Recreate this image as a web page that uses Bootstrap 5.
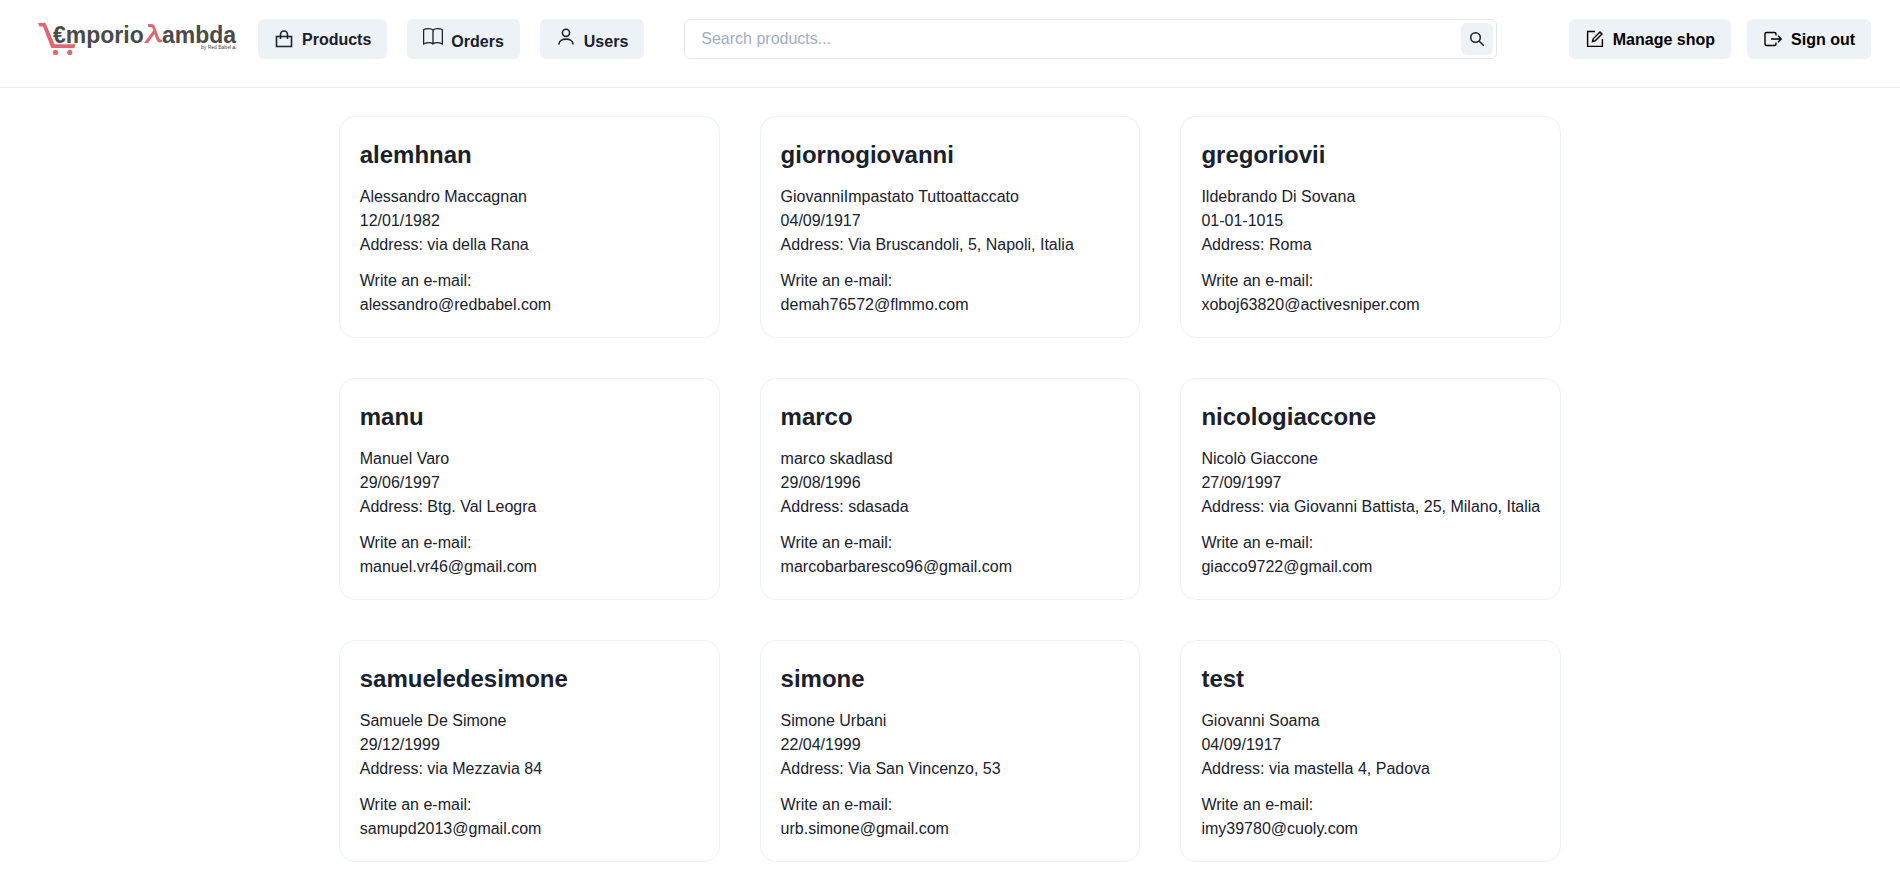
<!DOCTYPE html>
<html lang="en">
<head>
<meta charset="utf-8">
<meta name="viewport" content="width=device-width, initial-scale=1">
<title>Emporio Lambda - Users</title>
<link rel="stylesheet" href="https://cdn.jsdelivr.net/npm/bootstrap@5.3.0/dist/css/bootstrap.min.css">
<style>
  body { font-family: "Liberation Sans", Arial, sans-serif; color: #1a202c; background: #fff; font-size: 16px; line-height: 24px; }
  .site-header { padding: 19px 29px 28px 38px; border-bottom: 1px solid #edf0f3; }
  .main-nav { gap: 20px; margin: 0 40px 0 20px; }
  .shop-btn { --bs-btn-padding-x: 16px; --bs-btn-padding-y: 0px; --bs-btn-border-width: 0px; --bs-btn-border-radius: 6px;
    --bs-btn-bg: #edf2f7; --bs-btn-color: #1a202c; --bs-btn-hover-bg: #e2e8f0; --bs-btn-hover-color: #1a202c; --bs-btn-active-bg: #cbd5e0;
    height: 40px; font-weight: 700; line-height: 19px; white-space: nowrap; display: inline-flex; align-items: center; justify-content: center; }
  .shop-btn svg { width: 20px; height: 20px; margin-right: 8px; flex: none; }
  .shop-btn .inline-icon svg { vertical-align: baseline; }
  .account-btn { --bs-btn-color: #000; --bs-btn-hover-color: #000; }
  .search-form { margin-right: 72px; }
  .search-form .form-control { height: 40px; padding: 0 48px 0 16px; border: 1px solid #e2e8f0; border-radius: 6px; font-size: 16px; line-height: 24px; }
  .search-form .form-control::placeholder { color: #a0aec0; }
  .search-btn { width: 32px; height: 32px; top: 4px; right: 4px; --bs-btn-padding-x: 0px; }
  .search-btn svg { width: 16px; height: 16px; margin: 0; }
  .logo-text { font: 700 23px "Liberation Sans", Arial, sans-serif; fill: #4a4a4a; }
  .logo-by { font: 5px "Liberation Sans", Arial, sans-serif; fill: #4a4a4a; }
  .user-grid { display: grid; grid-template-columns: repeat(3, 1fr); gap: 40px; width: max-content; max-width: 100%; margin: 28px auto; }
  .user-card { --bs-card-border-color: #edf2f7; --bs-card-border-radius: 16px; --bs-card-spacer-x: 20px; --bs-card-spacer-y: 20px; color: inherit; }
  .user-card h2 { font-size: 24px; line-height: 36px; font-weight: 700; margin-bottom: 12px; }
  .user-card p { margin-bottom: 12px; }
  .user-card p:last-child { margin-bottom: 0; }
  .user-card a { color: inherit; text-decoration: none; }
  @media (max-width: 1280px) {
    .site-header { flex-wrap: wrap; row-gap: 16px; }
    .user-grid { grid-template-columns: 1fr; }
  }
</style>
</head>
<body>
<header class="site-header d-flex align-items-center">
  <a href="#" aria-label="Emporio Lambda" class="d-block flex-shrink-0">
    <svg class="d-block" width="200" height="40" viewBox="0 0 200 40">
      <path d="M0 4H7.500L16.500 25.300H37.800L36.300 29H13.300L5 7.400H1.500Z" fill="#e06670"/>
      <circle cx="17.500" cy="33.400" r="2.600" fill="#e06670"/>
      <circle cx="31.800" cy="33.400" r="2.600" fill="#e06670"/>
      <text class="logo-text" x="15" y="24">€mporio</text>
      <path d="M110 5H114Q116 5 117 8L121 19Q122 21.500 124 20.500L124.500 22.500Q120 25 118.300 20.500L116.500 15L110 24H106L115.200 11.500L114.500 9Q114 8 112.500 8H110Z" fill="#e06670"/>
      <text class="logo-text" x="124" y="24">ambda</text>
      <text class="logo-by" x="163" y="30">by Red Babel</text>
      <path d="M194 30L195 28L196 26.500L197 28L198 30Z" fill="#e06670"/>
    </svg>
  </a>
  <nav class="main-nav d-flex flex-shrink-0" aria-label="Main">
    <button type="button" class="btn shop-btn">
      <svg viewBox="0 0 20 20" fill="none" stroke="currentColor" stroke-width="1.600"><path d="M2.500 7.500H17.500V17.500H2.500ZM6.500 10V5.500A3.500 3.500 0 0 1 13.500 5.500V10"/></svg>Products
    </button>
    <button type="button" class="btn shop-btn">
      <span class="inline-icon"><svg viewBox="0 0 20 20" fill="none" stroke="currentColor" stroke-width="1.300"><path d="M10 3C8 1.300 3 1.300 .6 2.800V17C4 15.500 8 15.500 10 17C12 15.500 16 15.500 19.400 17V2.800C17 1.300 12 1.300 10 3ZM10 3V17"/></svg>Orders</span>
    </button>
    <button type="button" class="btn shop-btn">
      <span class="inline-icon"><svg viewBox="0 0 20 20" fill="none" stroke="currentColor" stroke-width="1.600"><circle cx="10" cy="5.800" r="3.600"/><path d="M3 17.500V17C3 10.500 17 10.500 17 17V17.500"/></svg>Users</span>
    </button>
  </nav>
  <form class="search-form position-relative flex-grow-1" role="search" onsubmit="return false">
    <input type="search" class="form-control" placeholder="Search products..." aria-label="Search products">
    <button type="submit" class="btn shop-btn search-btn position-absolute" aria-label="Search">
      <svg viewBox="0 0 16 16" fill="none" stroke="currentColor" stroke-width="1.500"><circle cx="6.500" cy="6.500" r="4.800"/><path d="M10 10L14.800 14.800"/></svg>
    </button>
  </form>
  <div class="d-flex gap-3 flex-shrink-0">
    <button type="button" class="btn shop-btn account-btn">
      <svg viewBox="0 0 20 20" fill="none" stroke="currentColor" stroke-width="1.400"><path d="M10 2.500H2.600V17.400H17.400V10M7.500 12.500L8.200 9.800L15 3L17 5L10.200 11.800Z"/></svg>Manage shop
    </button>
    <button type="button" class="btn shop-btn account-btn">
      <svg viewBox="0 0 20 20" fill="none" stroke="currentColor" stroke-width="1.400"><path d="M13 6.500V5Q13 3.500 11.500 3.500H3.500Q2 3.500 2 5V15Q2 16.500 3.500 16.500H11.500Q13 16.500 13 15V13.500M8 10H18M15 6.800L18.200 10L15 13.200"/></svg>Sign out
    </button>
  </div>
</header>

<main class="user-grid">
  <article class="card user-card"><div class="card-body">
    <h2>alemhnan</h2>
    <p>Alessandro Maccagnan<br>12/01/1982<br>Address: via della Rana</p>
    <p>Write an e-mail:<br><a href="mailto:alessandro@redbabel.com">alessandro@redbabel.com</a></p>
  </div></article>
  <article class="card user-card"><div class="card-body">
    <h2>giornogiovanni</h2>
    <p>GiovanniImpastato Tuttoattaccato<br>04/09/1917<br>Address: Via Bruscandoli, 5, Napoli, Italia</p>
    <p>Write an e-mail:<br><a href="mailto:demah76572@flmmo.com">demah76572@flmmo.com</a></p>
  </div></article>
  <article class="card user-card"><div class="card-body">
    <h2>gregoriovii</h2>
    <p>Ildebrando Di Sovana<br>01-01-1015<br>Address: Roma</p>
    <p>Write an e-mail:<br><a href="mailto:xoboj63820@activesniper.com">xoboj63820@activesniper.com</a></p>
  </div></article>
  <article class="card user-card"><div class="card-body">
    <h2>manu</h2>
    <p>Manuel Varo<br>29/06/1997<br>Address: Btg. Val Leogra</p>
    <p>Write an e-mail:<br><a href="mailto:manuel.vr46@gmail.com">manuel.vr46@gmail.com</a></p>
  </div></article>
  <article class="card user-card"><div class="card-body">
    <h2>marco</h2>
    <p>marco skadlasd<br>29/08/1996<br>Address: sdasada</p>
    <p>Write an e-mail:<br><a href="mailto:marcobarbaresco96@gmail.com">marcobarbaresco96@gmail.com</a></p>
  </div></article>
  <article class="card user-card"><div class="card-body">
    <h2>nicologiaccone</h2>
    <p>Nicolò Giaccone<br>27/09/1997<br>Address: via Giovanni Battista, 25, Milano, Italia</p>
    <p>Write an e-mail:<br><a href="mailto:giacco9722@gmail.com">giacco9722@gmail.com</a></p>
  </div></article>
  <article class="card user-card"><div class="card-body">
    <h2>samueledesimone</h2>
    <p>Samuele De Simone<br>29/12/1999<br>Address: via Mezzavia 84</p>
    <p>Write an e-mail:<br><a href="mailto:samupd2013@gmail.com">samupd2013@gmail.com</a></p>
  </div></article>
  <article class="card user-card"><div class="card-body">
    <h2>simone</h2>
    <p>Simone Urbani<br>22/04/1999<br>Address: Via San Vincenzo, 53</p>
    <p>Write an e-mail:<br><a href="mailto:urb.simone@gmail.com">urb.simone@gmail.com</a></p>
  </div></article>
  <article class="card user-card"><div class="card-body">
    <h2>test</h2>
    <p>Giovanni Soama<br>04/09/1917<br>Address: via mastella 4, Padova</p>
    <p>Write an e-mail:<br><a href="mailto:imy39780@cuoly.com">imy39780@cuoly.com</a></p>
  </div></article>
</main>
<script src="https://cdn.jsdelivr.net/npm/bootstrap@5.3.0/dist/js/bootstrap.bundle.min.js"></script>
</body>
</html>
